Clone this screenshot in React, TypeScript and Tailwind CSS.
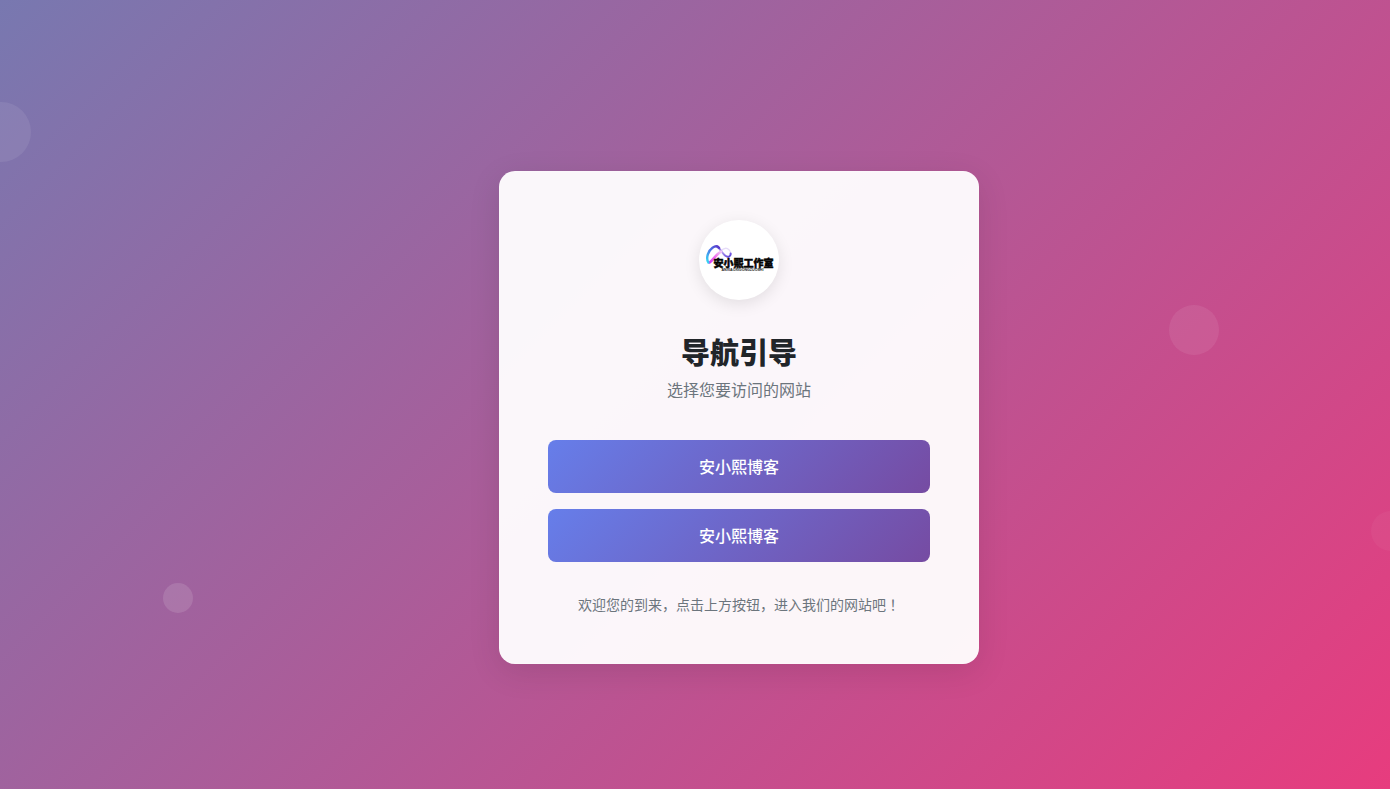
const sites = [
  { name: '安小熙博客', href: '#blog' },
  { name: '安小熙博客', href: '#blog-mirror' },
];

function Logo() {
  return (
    <svg viewBox="0 0 80 80" className="size-20" role="img" aria-label="安小熙工作室">
      <defs>
        <linearGradient id="arc" x1="0" y1="1" x2="1" y2="0">
          <stop offset="0" stopColor="#35d8f4" />
          <stop offset="0.5" stopColor="#4a7be8" />
          <stop offset="1" stopColor="#5a35c8" />
        </linearGradient>
        <linearGradient id="ribbon" x1="0" y1="1" x2="1" y2="0">
          <stop offset="0" stopColor="#d838f4" />
          <stop offset="0.6" stopColor="#f07cec" />
          <stop offset="1" stopColor="#f0c8f8" />
        </linearGradient>
        <linearGradient id="loop" x1="0" y1="0" x2="1" y2="1">
          <stop offset="0" stopColor="#5a35c8" />
          <stop offset="0.4" stopColor="#b9a4f0" />
          <stop offset="1" stopColor="#5b3fd8" />
        </linearGradient>
      </defs>
      <path d="M21.5 31.5 C23.5 29 26 27.6 28.5 28.6 C30.5 29.6 31.6 31.4 32 33.5" fill="none" stroke="#e6dcf8" strokeWidth="1.3" strokeLinecap="round" />
      <path d="M18 26.5 C21 28 23 33 26 35.5 C28.5 37.6 32 37 31.6 33.4" fill="none" stroke="url(#loop)" strokeWidth="2" strokeLinecap="round" />
      <path d="M10.6 42.5 C13.5 40.5 17 34.5 22 31.6" fill="none" stroke="url(#ribbon)" strokeWidth="2.6" strokeLinecap="round" />
      <path d="M9.4 42.6 C6.4 38 9.5 30.5 13.5 27.8 C15.8 26.2 18.4 25.8 20 27.8" fill="none" stroke="url(#arc)" strokeWidth="2.4" strokeLinecap="round" />
      <text x="14.5" y="46.5" fontSize="10" fontWeight="900" fill="#050505" stroke="#050505" strokeWidth="0.5" fontFamily="'Noto Sans CJK SC', sans-serif">
        安小熙工作室
      </text>
      <text x="22.5" y="51" fontSize="3.6" fontWeight="700" fill="#222222" fontFamily="'Liberation Sans', sans-serif">
        ANXIAOXIGONGZUOSHI
      </text>
    </svg>
  );
}

export default function App() {
  return (
    <div className="relative flex min-h-screen items-center justify-center overflow-hidden bg-linear-[135deg,#7878b0,#e73c7e] pt-[46px] pl-[88px] font-['Noto_Sans_CJK_SC',sans-serif]">
      <div className="absolute top-[102px] -left-[29px] size-[60px] rounded-full bg-white/8" />
      <div className="absolute top-[305px] left-[1169px] size-[50px] rounded-full bg-white/8" />
      <div className="absolute top-[583px] left-[163px] size-[30px] rounded-full bg-white/12" />
      <div className="absolute top-[511px] left-[1371px] size-10 rounded-full bg-white/4" />

      <main className="relative flex w-full max-w-[480px] flex-col items-center rounded-2xl border border-white/20 bg-white/95 p-12 text-center shadow-[0_8px_32px_rgba(0,0,0,0.1)]">
        <div className="size-20 overflow-hidden rounded-full bg-white shadow-[0_4px_16px_rgba(0,0,0,0.1)]">
          <Logo />
        </div>
        <h1 className="mt-[30px] text-[29px] leading-[42px] font-black text-[#212529]">导航引导</h1>
        <p className="mt-[5px] text-base leading-6 text-[#6c757d]">选择您要访问的网站</p>
        <nav className="mt-[39px] flex w-full flex-col gap-4">
          {sites.map((site) => (
            <a
              key={site.href}
              href={site.href}
              className="flex h-[53px] items-center justify-center rounded-lg bg-linear-[135deg,#667eea,#764ba2] pb-0.5 text-base font-medium text-white"
            >
              {site.name}
            </a>
          ))}
        </nav>
        <p className="mt-8 text-sm leading-[21px] text-[#6c757d]">
          欢迎您的到来，点击上方按钮，进入我们的网站吧
          <span className="font-['Noto_Sans_CJK_TC',sans-serif]">！</span>
        </p>
      </main>
    </div>
  );
}
